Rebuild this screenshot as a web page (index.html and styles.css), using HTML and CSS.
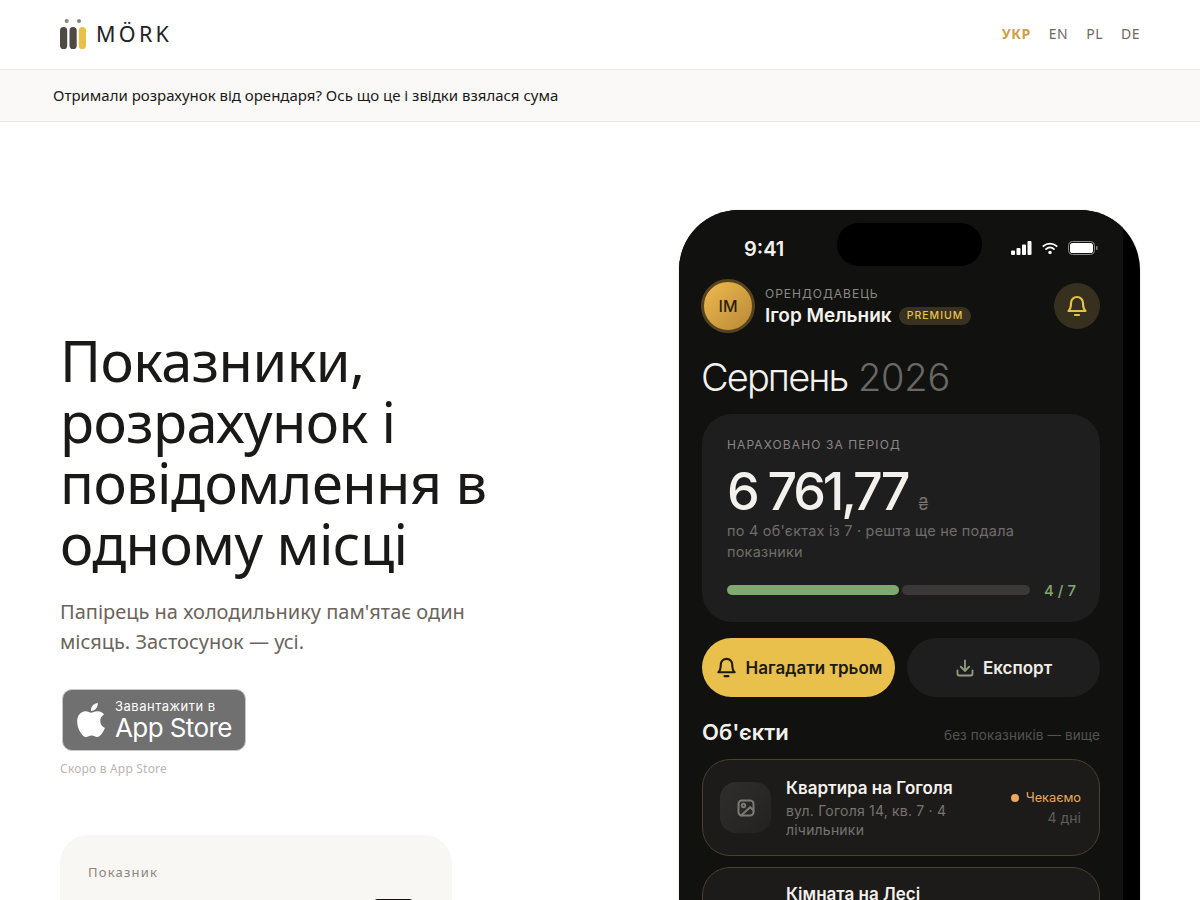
FILE: index.html
```html
<!DOCTYPE html>
<html lang="uk">
<head>
    <meta charset="UTF-8">
    <meta name="viewport" content="width=device-width, initial-scale=1.0">
    <title>MÖRK</title>
    <link rel="stylesheet" href="styles.css">
</head>
<body>
    <header class="topbar">
        <a class="logo" href="#">
            <svg class="logo-mark" width="26" height="30" viewBox="0 0 26 30">
                <circle cx="6.700" cy="2" r="2" fill="#8a847c"/>
                <circle cx="19" cy="2" r="2" fill="#8a847c"/>
                <rect x="0" y="8" width="7.200" height="22" rx="3.600" fill="#4f4943"/>
                <rect x="9.500" y="8" width="7.200" height="22" rx="3.600" fill="#4f4943"/>
                <rect x="18.800" y="8" width="7.200" height="22" rx="3.600" fill="#e8c14a"/>
            </svg>
            <span class="logo-text">MÖRK</span>
        </a>
        <nav class="langs">
            <a class="lang active" href="#">УКР</a>
            <a class="lang" href="#">EN</a>
            <a class="lang" href="#">PL</a>
            <a class="lang" href="#">DE</a>
        </nav>
    </header>

    <div class="notice">Отримали розрахунок від орендаря? Ось що це і звідки взялася сума</div>

    <main class="hero">
        <section class="intro">
            <h1>Показники, розрахунок і повідомлення в одному місці</h1>
            <p class="lead">Папірець на холодильнику пам'ятає один місяць. Застосунок — усі.</p>
            <a class="store-badge" href="#">
                <svg class="store-apple" width="34" height="34" viewBox="0 0 24 24" fill="#fff"><path d="M12.152 6.896c-.948 0-2.415-1.078-3.96-1.04-2.04.027-3.91 1.183-4.961 3.014-2.117 3.675-.546 9.103 1.519 12.09 1.013 1.454 2.208 3.09 3.792 3.039 1.52-.065 2.09-.987 3.935-.987 1.831 0 2.35.987 3.96.948 1.637-.026 2.676-1.48 3.676-2.948 1.156-1.688 1.636-3.325 1.662-3.415-.039-.013-3.182-1.221-3.22-4.857-.026-3.04 2.48-4.494 2.597-4.559-1.429-2.09-3.623-2.324-4.39-2.376-2-.156-3.675 1.09-4.61 1.09zM15.53 3.83c.843-1.012 1.4-2.427 1.245-3.83-1.207.052-2.662.805-3.532 1.818-.78.896-1.454 2.338-1.273 3.714 1.338.104 2.715-.688 3.559-1.701"/></svg>
                <span class="store-text">
                    <span class="store-small">Завантажити в</span>
                    <span class="store-big">App Store</span>
                </span>
            </a>
            <div class="store-note">Скоро в App Store</div>
            <div class="meter-card">
                <div class="meter-label">Показник</div>
                <div class="meter-chip"></div>
            </div>
        </section>

        <section class="phone">
            <div class="island"></div>
            <div class="screen">
                <div class="status">
                    <span class="clock">9:41</span>
                    <span class="status-icons">
                        <svg width="21" height="14" viewBox="0 0 21 14" fill="#fff">
                            <rect x="0" y="9.500" width="4" height="4.500" rx="1"/>
                            <rect x="5.500" y="7" width="4" height="7" rx="1"/>
                            <rect x="11" y="3.500" width="4" height="10.500" rx="1"/>
                            <rect x="16.500" y="0" width="4" height="14" rx="1"/>
                        </svg>
                        <svg width="16" height="14" viewBox="0 0 18 14" fill="none" stroke="#fff" stroke-width="2" stroke-linecap="round">
                            <path d="M1.500 5a11 11 0 0 1 15 0"/>
                            <path d="M4.500 8.200a6.600 6.600 0 0 1 9 0"/>
                            <circle cx="9" cy="12" r="1" fill="#fff"/>
                        </svg>
                        <svg width="30" height="14" viewBox="0 0 30 14">
                            <rect x="0.500" y="0.500" width="26" height="13" rx="4" fill="none" stroke="#8a8a8a"/>
                            <rect x="2" y="2" width="23" height="10" rx="2.600" fill="#fff"/>
                            <rect x="28" y="5" width="1.500" height="4" rx="0.700" fill="#8a8a8a"/>
                        </svg>
                    </span>
                </div>

                <div class="user-row">
                    <div class="avatar">ІМ</div>
                    <div class="user-info">
                        <div class="user-role">ОРЕНДОДАВЕЦЬ</div>
                        <div class="user-name">Ігор Мельник <span class="tag">PREMIUM</span></div>
                    </div>
                    <div class="bell-btn">
                        <svg width="24" height="24" viewBox="0 0 24 24" fill="none" stroke="#e8c14a" stroke-width="2.200" stroke-linecap="round" stroke-linejoin="round"><path d="M6 9a6 6 0 0 1 12 0c0 5.500 1.500 7 2.500 8h-17C4.500 16 6 14.500 6 9z"/><path d="M10 21h4"/></svg>
                    </div>
                </div>

                <h2 class="month"><span class="month-name">Серпень</span> <span class="year">2026</span></h2>

                <div class="total-card">
                    <div class="total-label">НАРАХОВАНО ЗА ПЕРІОД</div>
                    <div class="total-sum">6 761,77 <span class="currency">₴</span></div>
                    <p class="total-sub">по 4 об'єктах із 7 · решта ще не подала показники</p>
                    <div class="progress">
                        <div class="progress-fill"></div>
                        <div class="progress-rest"></div>
                        <span class="progress-num">4 / 7</span>
                    </div>
                </div>

                <div class="actions">
                    <button class="btn btn-remind">
                        <svg width="23" height="23" viewBox="0 0 24 24" fill="none" stroke="#1c1a14" stroke-width="2.200" stroke-linecap="round" stroke-linejoin="round"><path d="M6 9a6 6 0 0 1 12 0c0 5.500 1.500 7 2.500 8h-17C4.500 16 6 14.500 6 9z"/><path d="M10 21h4"/></svg>
                        Нагадати трьом
                    </button>
                    <button class="btn btn-export">
                        <svg width="20" height="20" viewBox="0 0 24 24" fill="none" stroke="#8f9c80" stroke-width="2.200" stroke-linecap="round" stroke-linejoin="round"><path d="M12 3v12"/><path d="M7 10.500l5 5 5-5"/><path d="M3 15v4a2 2 0 0 0 2 2h14a2 2 0 0 0 2-2v-4"/></svg>
                        Експорт
                    </button>
                </div>

                <div class="list-head">
                    <h3>Об'єкти</h3>
                    <span class="list-hint">без показників — вище</span>
                </div>

                <div class="item">
                    <div class="item-icon">
                        <svg width="20" height="20" viewBox="0 0 24 24" fill="none" stroke="#7d7a75" stroke-width="2.400" stroke-linecap="round" stroke-linejoin="round"><rect x="3" y="3" width="18" height="18" rx="4"/><circle cx="9" cy="9" r="2"/><path d="M21 15l-4-4L6 21"/></svg>
                    </div>
                    <div class="item-main">
                        <div class="item-title">Квартира на Гоголя</div>
                        <div class="item-sub">вул. Гоголя 14, кв. 7 · 4 лічильники</div>
                    </div>
                    <div class="item-state">
                        <div class="state-wait"><i class="dot"></i>Чекаємо</div>
                        <div class="state-days">4 дні</div>
                    </div>
                </div>

                <div class="item item-next">
                    <div class="item-icon"></div>
                    <div class="item-main">
                        <div class="item-title">Кімната на Лесі</div>
                    </div>
                </div>
            </div>
        </section>
    </main>
</body>
</html>
```

FILE: styles.css
```css
* {
    box-sizing: border-box;
    margin: 0;
    padding: 0;
}

html,
body {
    height: 100vh;
    overflow: hidden;
}

body {
    font-family: "Noto Sans", sans-serif;
    background-color: #fff;
    color: #1a1917;
}

a {
    text-decoration: none;
    color: inherit;
}

.topbar {
    height: 70px;
    padding: 0 60px 2px;
    display: flex;
    justify-content: space-between;
    align-items: center;
    border-bottom: 1px solid #e8e6e3;
}

.logo {
    display: flex;
    align-items: center;
    gap: 10px;
}

.logo-text {
    font-size: 21.500px;
    letter-spacing: 3.300px;
    color: #222;
}

.langs {
    display: flex;
    gap: 18px;
}

.lang {
    font-size: 14px;
    letter-spacing: 0.500px;
    color: #6d6962;
}

.lang.active {
    font-weight: 700;
    color: #cf9f45;
}

.notice {
    height: 52px;
    padding: 0 0 2px 53px;
    display: flex;
    align-items: center;
    font-size: 15px;
    background-color: #fbf9f7;
    border-bottom: 1px solid #e8e6e3;
}

.hero {
    padding: 88px 60px 0;
    display: flex;
    justify-content: space-between;
    align-items: flex-start;
}

.intro {
    width: 460px;
    padding-top: 120px;
}

h1 {
    font-size: 56px;
    font-weight: 400;
    line-height: 61px;
    letter-spacing: -0.560px;
    color: #1a1917;
}

.lead {
    margin-top: 23.400px;
    width: 420px;
    font-size: 20px;
    line-height: 30px;
    color: #6b645c;
}

.store-badge {
    margin: 32px 0 0 2px;
    width: 184px;
    height: 62px;
    padding-left: 14px;
    display: flex;
    align-items: center;
    gap: 7px;
    background-color: #707070;
    border: 1px solid #c8c8c8;
    border-radius: 10px;
    color: #fff;
    font-family: "Inter", sans-serif;
}

.store-apple {
    margin-left: -3px;
}

.store-text {
    display: flex;
    flex-direction: column;
}

.store-small {
    font-size: 13px;
    line-height: 15px;
    letter-spacing: 0.500px;
}

.store-big {
    font-size: 26px;
    line-height: 27px;
    letter-spacing: -0.600px;
}

.store-note {
    margin-top: 9px;
    font-size: 12px;
    letter-spacing: 0.200px;
    color: #b9b6b2;
}

.meter-card {
    position: relative;
    margin-top: 58px;
    width: 392px;
    height: 200px;
    padding: 28px;
    background-color: #f9f7f4;
    border-radius: 28px;
}

.meter-label {
    font-size: 13px;
    letter-spacing: 1.200px;
    color: #8a847c;
}

.meter-chip {
    position: absolute;
    top: 64px;
    right: 37px;
    width: 43px;
    height: 30px;
    background-color: #15110f;
    border-radius: 6px;
}

/* phone mock */
.phone {
    position: relative;
    flex: none;
    width: 461px;
    height: 900px;
    background-color: #000;
    border-radius: 60px 60px 0 0;
    overflow: hidden;
    box-shadow: 0 0 2px rgba(0, 0, 0, 0.2);
    font-family: "Inter", sans-serif;
}

.island {
    position: absolute;
    top: 13px;
    left: 158px;
    width: 145px;
    height: 43px;
    background-color: #000;
    border-radius: 22px;
}

.screen {
    width: 444px;
    height: 100%;
    padding: 0 23px;
    background-color: #111110;
    color: #f4f1ec;
}

.status {
    height: 69px;
    padding: 28px 2px 0 42px;
    display: flex;
    justify-content: space-between;
    align-items: flex-start;
}

.clock {
    font-size: 20px;
    line-height: 22px;
    font-weight: 600;
}

.status-icons {
    margin-top: 3px;
    display: flex;
    align-items: center;
    gap: 10px;
}

.user-row {
    display: flex;
    align-items: center;
}

.avatar {
    flex: none;
    width: 54px;
    height: 54px;
    margin-left: -1px;
    display: flex;
    justify-content: center;
    align-items: center;
    font-size: 16px;
    font-weight: 500;
    color: #2a2010;
    background: linear-gradient(135deg, #eeba4e, #b98a38);
    border: 3px solid #57431f;
    border-radius: 50%;
}

.user-info {
    flex: 1;
    margin-left: 10px;
}

.user-role {
    padding-top: 2px;
    font-size: 12px;
    letter-spacing: 1px;
    line-height: 16px;
    color: #8c8983;
}

.user-name {
    margin-top: 2px;
    display: flex;
    align-items: center;
    gap: 7px;
    font-size: 19px;
    line-height: 24px;
    font-weight: 600;
}

.tag {
    height: 18px;
    padding: 0 8px;
    display: flex;
    align-items: center;
    font-size: 10.500px;
    font-weight: 500;
    letter-spacing: 1px;
    color: #e8c14a;
    background-color: #3a3220;
    border-radius: 9px;
}

.bell-btn {
    width: 46px;
    height: 46px;
    display: flex;
    justify-content: center;
    align-items: center;
    background-color: #38301f;
    border-radius: 50%;
}

.month {
    margin: 21px 0 0 -1px;
    font-size: 38px;
    line-height: 46px;
    font-weight: 300;
    letter-spacing: -0.200px;
}

.month-name {
    letter-spacing: -1.900px;
}

.year {
    color: #6a6865;
}

.total-card {
    margin-top: 14px;
    height: 208px;
    padding: 24px 25px;
    background-color: #1f1e1e;
    border-radius: 30px;
}

.total-label {
    font-size: 12px;
    line-height: 14px;
    letter-spacing: 1.100px;
    color: #8a8884;
}

.total-sum {
    margin-top: 25px;
    font-size: 52px;
    line-height: 30px;
    font-weight: 500;
    letter-spacing: -3.100px;
}

.currency {
    font-size: 17px;
    font-weight: 400;
    letter-spacing: 0;
    color: #77746f;
}

.total-sub {
    margin-top: 0.500px;
    font-size: 14.500px;
    line-height: 21px;
    letter-spacing: 0.200px;
    color: #6f6d69;
}

.progress {
    margin-top: 19px;
    display: flex;
    align-items: center;
    gap: 3px;
}

.progress-fill {
    flex: none;
    width: 172px;
    height: 10px;
    background-color: #7fa96e;
    border-radius: 5px;
}

.progress-rest {
    flex: none;
    width: 128px;
    height: 10px;
    background-color: #3a3938;
    border-radius: 5px;
}

.progress-num {
    margin-left: 11px;
    font-size: 15px;
    font-weight: 500;
    white-space: nowrap;
    color: #7fa96e;
}

.actions {
    margin-top: 16px;
    display: grid;
    grid-template-columns: 1fr 1fr;
    gap: 12px;
}

.btn {
    height: 59px;
    display: flex;
    justify-content: center;
    align-items: center;
    gap: 8px;
    border: none;
    border-radius: 30px;
    font-family: "Inter", sans-serif;
    font-size: 17px;
    font-weight: 600;
}

.btn-remind {
    background-color: #e9c04b;
    color: #1c1a14;
}

.btn-export {
    background-color: #1f1e1e;
    color: #f0ede8;
}

.list-head {
    margin-top: 21px;
    display: flex;
    justify-content: space-between;
    align-items: center;
}

.list-head h3 {
    font-size: 22px;
    line-height: 28px;
    font-weight: 600;
}

.list-hint {
    margin-top: 5px;
    font-size: 13.500px;
    letter-spacing: 0.100px;
    color: #55534f;
}

.item {
    margin-top: 11px;
    height: 98px;
    padding: 0 18px 0 17px;
    display: flex;
    align-items: center;
    gap: 15px;
    background-color: #1c1b1a;
    border: 1px solid #4d3f2e;
    border-radius: 28px;
}

.list-head + .item {
    margin-top: 13px;
    height: 97px;
}

/* second row runs off the bottom of the frame */
.item-next {
    height: 140px;
    padding-top: 14px;
    align-items: flex-start;
}

.item-next .item-icon {
    margin-top: 30px;
}

.item-icon {
    flex: none;
    width: 51px;
    height: 51px;
    display: flex;
    justify-content: center;
    align-items: center;
    background: linear-gradient(135deg, #2f2e2d, #232221);
    border-radius: 16px;
}

.item-main {
    flex: 1;
}

.item-title {
    font-size: 17px;
    line-height: 24px;
    font-weight: 600;
}

.item-sub {
    margin-top: 2px;
    font-size: 14px;
    line-height: 18.500px;
    letter-spacing: 0.200px;
    color: #77746f;
}

.item-state {
    flex: none;
    text-align: right;
}

.state-wait {
    display: flex;
    align-items: center;
    gap: 7px;
    font-size: 12.800px;
    line-height: 20px;
    color: #e9a95c;
}

.dot {
    width: 8px;
    height: 8px;
    background-color: #e9a95c;
    border-radius: 50%;
}

.state-days {
    font-size: 14px;
    line-height: 20px;
    color: #5f5d59;
}
```
